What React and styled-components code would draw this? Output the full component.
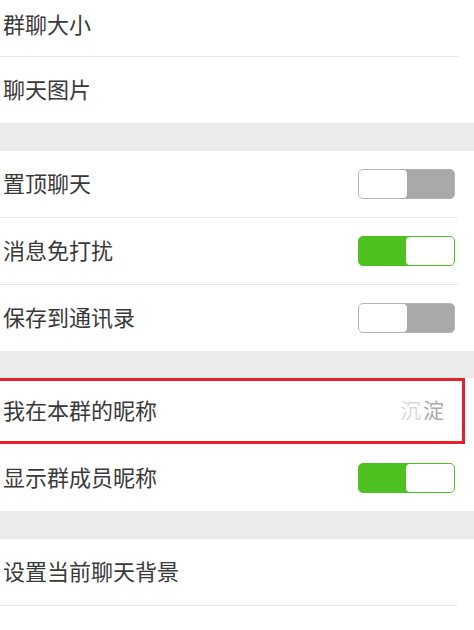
import React from 'react'
import styled, { createGlobalStyle } from 'styled-components'

const GlobalStyle = createGlobalStyle`
  html, body {
    margin: 0;
    padding: 0;
    background: #ffffff;
  }
  body {
    font-family: "Noto Sans CJK SC", "Noto Sans", sans-serif;
    overflow: hidden;
  }
`

const Page = styled.div`
  width: 474px;
  height: 630px;
  background: #ffffff;
  display: flex;
  flex-direction: column;
`

const Group = styled.div`
  background: #ffffff;
  display: flex;
  flex-direction: column;
`

const Spacer = styled.div`
  height: ${(props) => props.h}px;
  background: #ebebeb;
  flex-shrink: 0;
`

const Row = styled.div`
  box-sizing: border-box;
  height: ${(props) => props.h || 66}px;
  padding: 0 19px ${(props) => props.pb || 0}px 3px;
  display: flex;
  align-items: center;
  justify-content: space-between;
  flex-shrink: 0;
  ${(props) =>
    props.marked &&
    `
    width: 465px;
    padding-right: 18px;
    border: 3.5px solid #e8202a;
    border-left: 0;
  `}
`

const Divider = styled.div`
  height: 1px;
  width: 458px;
  background: #e6e6e6;
  flex-shrink: 0;
`

const Label = styled.span`
  font-size: 22px;
  line-height: 1;
  margin-bottom: 4px;
  color: #3a3a3a;
`

const Value = styled.span`
  font-size: 21px;
  line-height: 1;
  margin-bottom: 4px;
  color: #ababab;
`

const Faded = styled.span`
  opacity: 0.45;
  margin-right: 2px;
`

const Toggle = styled.div`
  box-sizing: border-box;
  width: 97px;
  height: 30px;
  border-radius: 5px;
  border: 1.5px solid ${(props) => (props.on ? '#4cc11f' : '#b4b4b4')};
  background: ${(props) => (props.on ? '#4cc11f' : '#a9a9a9')};
  display: flex;
  justify-content: ${(props) => (props.on ? 'flex-end' : 'flex-start')};
`

const Knob = styled.div`
  width: 48px;
  height: 100%;
  background: #ffffff;
  border-radius: 4px;
`

function Switch({ on }) {
  return (
    <Toggle on={on ? 1 : 0}>
      <Knob />
    </Toggle>
  )
}

export default function App() {
  return (
    <Page>
      <GlobalStyle />
      <Group>
        <Row h={56} pb={6}>
          <Label>群聊大小</Label>
        </Row>
        <Divider />
        <Row>
          <Label>聊天图片</Label>
        </Row>
      </Group>
      <Spacer h={28} />
      <Group>
        <Row>
          <Label>置顶聊天</Label>
          <Switch />
        </Row>
        <Divider />
        <Row>
          <Label>消息免打扰</Label>
          <Switch on />
        </Row>
        <Divider />
        <Row>
          <Label>保存到通讯录</Label>
          <Switch />
        </Row>
      </Group>
      <Spacer h={27} />
      <Group>
        <Row marked h={66}>
          <Label>我在本群的昵称</Label>
          <Value>
            <Faded>沉</Faded>淀
          </Value>
        </Row>
        <Row h={67}>
          <Label>显示群成员昵称</Label>
          <Switch on />
        </Row>
      </Group>
      <Spacer h={28} />
      <Group>
        <Row>
          <Label>设置当前聊天背景</Label>
        </Row>
        <Divider />
      </Group>
    </Page>
  )
}
